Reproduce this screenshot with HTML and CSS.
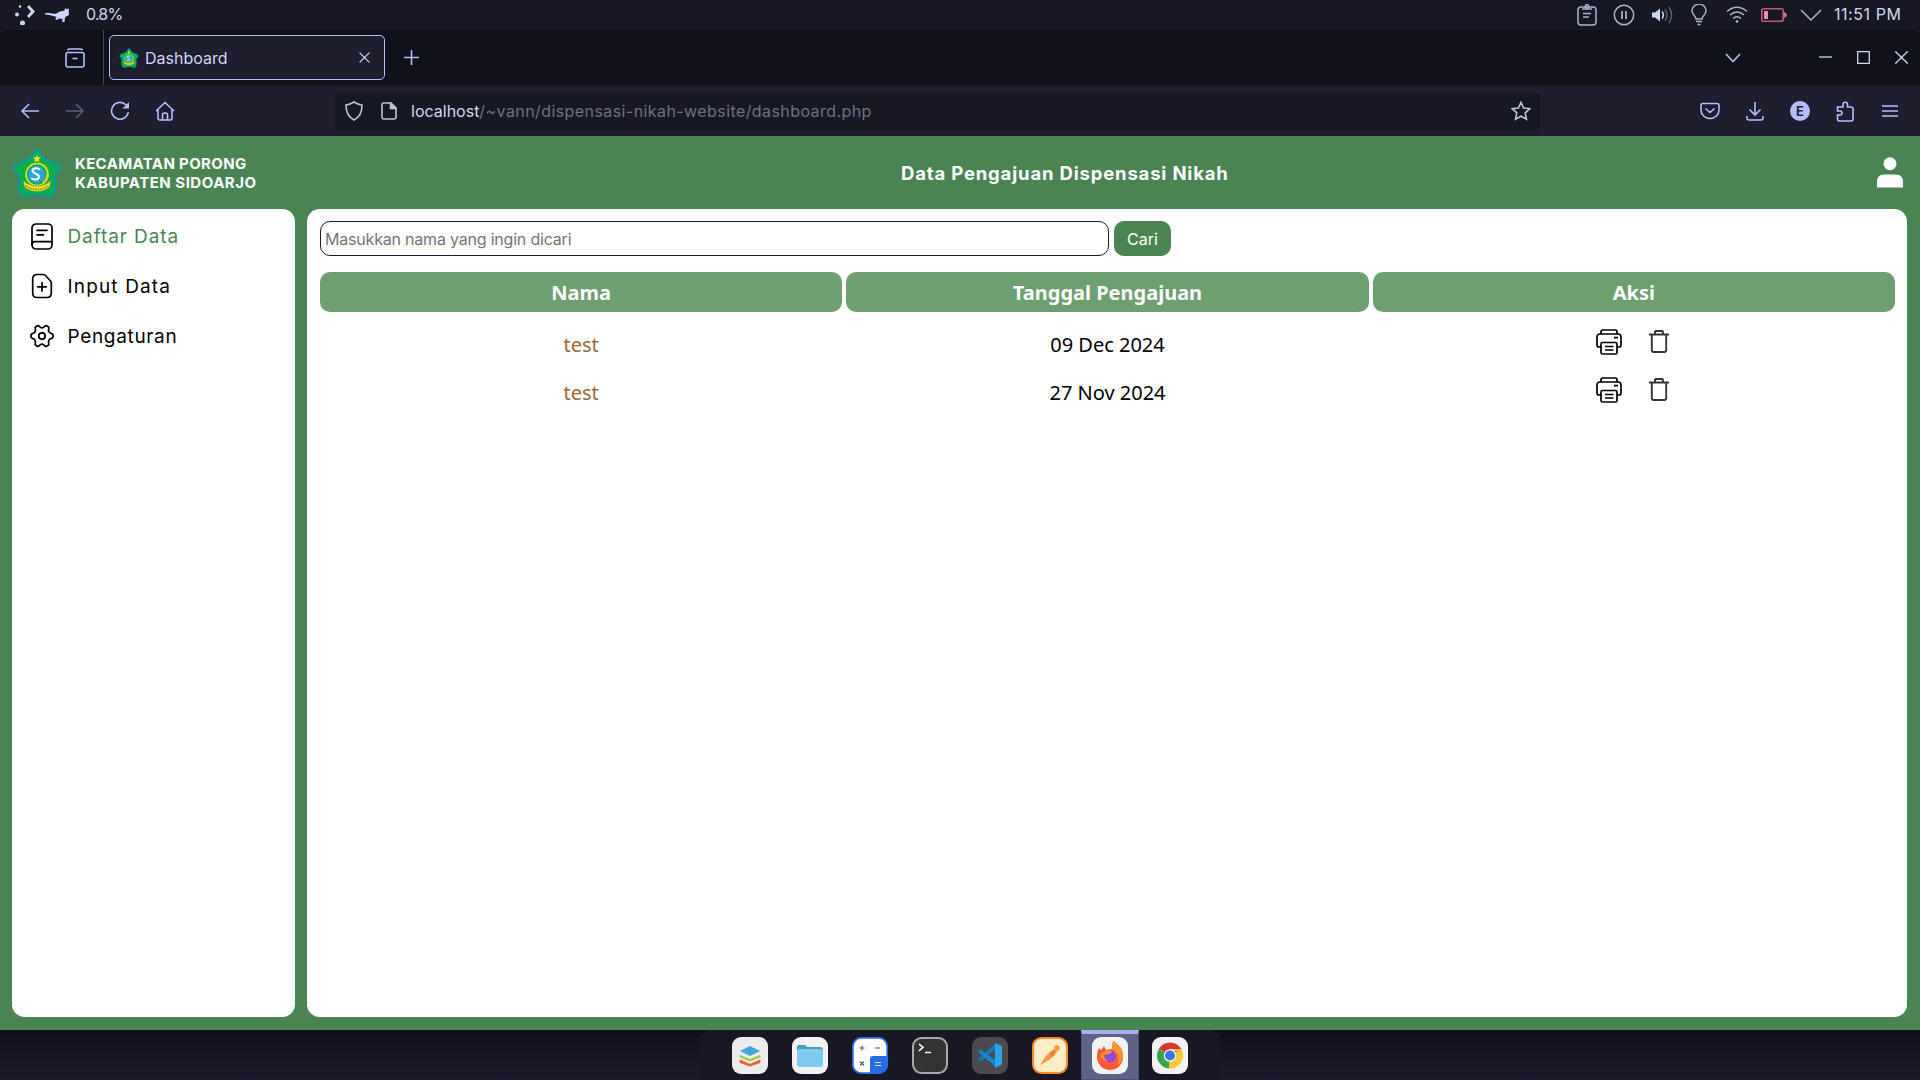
FILE: index.html
```html
<!DOCTYPE html>
<html lang="id">
<head>
<meta charset="utf-8">
<title>Dashboard</title>
<link rel="stylesheet" href="styles.css">
</head>
<body>
<svg class="defs" width="0" height="0">
  <symbol id="crest" viewBox="0 0 50 48">
    <path d="M22 3l1.500-2h3L28 3c1 5 4 7 8 8l6 3 5 1-1 2 3 2-2 2c-4 4-5 8-4 14l.5 6-2 2 .5 3-3 2-5-1c-6-2-12-2-18 0l-5 1-3-2 .5-3-2-2L7 35c1-6 0-10-4-14l-2-2 3-2-1-2 5-1 6-3c4-1 7-3 8-8z" fill="#08ae4c" stroke="#0895bd" stroke-width="1.500"/>
    <path d="M25 5.500l1 3h3.200l-2.500 2 1 3-2.700-1.800-2.700 1.800 1-3-2.500-2H24z" fill="#f5e52c"/>
    <circle cx="25" cy="25.500" r="11" fill="none" stroke="#e9df27" stroke-width="1.500"/>
    <circle cx="24.500" cy="25.500" r="8.500" fill="#2aa5df"/>
    <path d="M28 21c-2-3-7.500-2-7.500.8s7 3.200 6.500 6.200-6 3.400-7.500 1" fill="none" stroke="#fff" stroke-width="2"/>
    <path d="M31 16c6 4 6 13 0 17" fill="none" stroke="#d9d227" stroke-width="2.500" stroke-dasharray="2 1"/>
    <path d="M11 31c7 8 21 8 28 0l-1.500 7c-7 6-18 6-25 0z" fill="#f1df23" stroke="#66903b" stroke-width=".6"/>
    <path d="M14 37c7 4.500 15 4.500 22 0" fill="none" stroke="#6f7d28" stroke-width="1.200" stroke-dasharray="1.500 1"/>
  </symbol>
  <symbol id="printer" viewBox="0 0 26 26" fill="none" stroke="#000" stroke-width="1.700" stroke-linejoin="round">
    <path d="M5 5V3q0-2 2-2h12q2 0 2 2v2M5 18H3q-2 0-2-2V8q0-3 3-3h18q3 0 3 3v8q0 2-2 2h-2"/>
    <rect x="5" y="13.500" width="16" height="11.500" rx="1.500"/>
    <path d="M9 17.500h8.500M9 21h8.500M18 8.700h4"/>
  </symbol>
  <symbol id="trash" viewBox="0 0 20 23" fill="none" stroke="#333" stroke-width="1.900">
    <path d="M0 4.500h20M6 4V2q0-1 1-1h6q1 0 1 1v2M2.800 5v15q0 2 2 2h10.400q2 0 2-2V5"/>
  </symbol>
</svg>

<header class="panel">
  <div class="panel-left">
    <svg width="20" height="20" viewBox="0 0 20 20" fill="#cdd6f4"><circle cx="5" cy="1.500" r="1.300"/><circle cx="2" cy="9.500" r="1.900"/><circle cx="7.500" cy="18" r="2.500"/><path d="M12 2l2-2 6 6.500-6 6.500-2-2 4-4.500z"/></svg>
    <svg width="25" height="15" viewBox="0 0 25 15"><path d="M0 5.200c5-.7 8 1.500 12 0 2-2 5-2 7.500-2.700L20 0l1.500 1.300L24 .5l-.3 3.500.3 2.500c-1 1.500-2.500 1.500-4 3L19.500 14h-2.300l.3-3-3.500-.5-2 1.500-1.800-.8 1.300-2.200C8 8 5 6.500 0 6.500z" fill="#cdd6f4"/></svg>
    <span class="load">0.8%</span>
  </div>
  <div class="panel-right">
    <svg width="20" height="22" viewBox="0 0 20 22" class="tray"><rect x="1" y="3" width="18" height="18" rx="3"/><circle cx="10" cy="2.500" r="1.800"/><path d="M5 5h10M6 9.500h8M6 13h6"/></svg>
    <svg width="22" height="22" viewBox="0 0 22 22" class="tray"><circle cx="11" cy="11" r="9.700"/><path d="M9 7v8M13 7v8" stroke-width="1.800"/></svg>
    <svg width="22" height="20" viewBox="0 0 22 20" class="tray"><path d="M1 7.500h3l5-4v13l-5-4H1z" fill="#cdd6f4" stroke="none"/><path d="M11 6.500q2.800 3.500 0 7" stroke="#cdd6f4"/><path d="M14 4.500q4 5.500 0 11M18 2q5 8 0 16" opacity=".45"/></svg>
    <svg width="16" height="22" viewBox="0 0 16 22" class="tray"><path d="M5 15c0-3-4-4-4-8a7 7 0 0 1 14 0c0 4-4 5-4 8zM5 17.500h6M6.500 20.500h3"/></svg>
    <svg width="22" height="18" viewBox="0 0 22 18" class="tray"><path d="M1 5.500q10-8.500 20 0M4 9q7-6 14 0M7 12.500q4-3.500 8 0"/><circle cx="11" cy="15.500" r="1.200" fill="#bac2de" stroke="none"/></svg>
    <svg class="battery" width="26" height="14" viewBox="0 0 26 14"><rect x=".8" y=".8" width="21.400" height="12.400" rx="2" fill="none" stroke="#b95d7b" stroke-width="1.600"/><path d="M3 3h4v8H3z" fill="#f38ba8"/><path d="M23 4q3 1 3 3t-3 3z" fill="#d16f8e"/></svg>
    <svg width="22" height="12" viewBox="0 0 22 12" class="tray"><path d="M1 1l10 10L21 1"/></svg>
    <time class="clock">11:51 PM</time>
  </div>
</header>

<section class="tabs">
  <svg class="archive" width="20" height="20" viewBox="0 0 20 20"><path d="M3.500 1h13M2.500 2.300L3.500 1M17.500 2.300L16.500 1"/><rect x="1" y="4.500" width="18" height="14.500" rx="2"/><path d="M7.500 10.500h5"/></svg>
  <span class="divider"></span>
  <div class="tab">
    <svg width="20" height="20"><use href="#crest"/></svg>
    <span class="tab-title">Dashboard</span>
    <svg class="tab-close" width="11" height="11" viewBox="0 0 11 11"><path d="M.6.6l9.800 9.800M10.400.6L.6 10.400"/></svg>
  </div>
  <svg class="plus" width="15" height="15" viewBox="0 0 15 15"><path d="M7.500 0v15M0 7.500h15"/></svg>
  <div class="window-controls">
    <svg class="list" width="16" height="10" viewBox="0 0 16 10"><path d="M1 1l7 7.500L15 1"/></svg>
    <svg width="13" height="13" viewBox="0 0 13 13"><path d="M0 6h13"/></svg>
    <svg width="13" height="13" viewBox="0 0 13 13"><path d="M.7.700h11.600v11.600H.7z"/></svg>
    <svg width="13" height="13" viewBox="0 0 13 13"><path d="M.3.300l12.400 12.400M12.700.3L.3 12.700"/></svg>
  </div>
</section>

<nav class="toolbar">
  <div class="nav-buttons">
    <svg width="20" height="20" viewBox="0 0 20 20"><path d="M19 10H2M9 3l-7 7 7 7"/></svg>
    <svg class="dim" width="20" height="20" viewBox="0 0 20 20"><path d="M1 10h17M11 3l7 7-7 7"/></svg>
    <svg width="20" height="20" viewBox="0 0 20 20"><path d="M18.300 11A8.400 8.400 0 1 1 15.500 3.500l2 2"/><path d="M19 1v6.500h-6.500z" fill="#b4befe" stroke="none"/></svg>
    <svg width="20" height="20" viewBox="0 0 20 20"><path d="M1 10l9-8.500 9 8.500M3 8.500V17q0 2 2 2h10q2 0 2-2V8.500M7.500 19v-5q0-2 2-2h1q2 0 2 2v5"/></svg>
  </div>
  <div class="urlbar">
    <svg width="18" height="20" viewBox="0 0 18 20"><path d="M9 1q4 2.500 8 3c0 7-2 12-8 15C3 16 1 11 1 4q4-.5 8-3z"/></svg>
    <svg width="16" height="18" viewBox="0 0 16 18"><path d="M3 1h7l5 5v9q0 2-2 2H3q-2 0-2-2V3q0-2 2-2z"/><path d="M9.500 1v5.500H15z" fill="#bac2de"/></svg>
    <span class="url"><b>localhost</b>/~vann/dispensasi-nikah-website/dashboard.php</span>
    <svg class="star" width="20" height="20" viewBox="0 0 20 20"><path d="M10 1.300l2.600 5.700 6.200.7-4.600 4.200 1.300 6.300L10 15.200l-5.500 3 1.300-6.300L1.200 7.700l6.200-.7z"/></svg>
  </div>
  <div class="tools">
    <svg width="20" height="18" viewBox="0 0 20 18"><path d="M3 1.500h14q2 0 2 2V8a9 8.500 0 0 1-18 0V3.500q0-2 2-2zM5.500 6.500l4.500 4 4.500-4"/></svg>
    <svg width="18" height="20" viewBox="0 0 18 20"><path d="M9 1v13M3.500 8.500L9 14l5.500-5.500M1 15v2q0 2 2 2h12q2 0 2-2v-2"/></svg>
    <span class="account">E</span>
    <svg width="18" height="21" viewBox="0 0 18 21"><path d="M1.500 6H7V3.500a2.200 2.200 0 0 1 4.500 0V6H15q2 0 2 2v10q0 2-2 2H3.500q-2 0-2-2v-4H4a2 2 0 0 0 0-4H1.500z"/></svg>
    <svg class="menu" width="16" height="14" viewBox="0 0 16 14"><path d="M0 2h16M0 7h16M0 12h16"/></svg>
  </div>
</nav>

<div class="page">
  <header class="page-header">
    <div class="brand">
      <svg width="50" height="48"><use href="#crest"/></svg>
      <div class="brand-name"><div class="line-a">KECAMATAN PORONG</div><div class="line-b">KABUPATEN SIDOARJO</div></div>
    </div>
    <h1 class="page-title">Data Pengajuan Dispensasi Nikah</h1>
    <svg class="user" width="26" height="31" viewBox="0 0 26 31" fill="#fff"><circle cx="13" cy="6.700" r="6.500"/><path d="M0 30.500V25q0-7.500 7-7.500h12q7 0 7 7.500v5.500z"/></svg>
  </header>
  <div class="page-body">
    <aside class="sidebar">
      <a class="item active"><svg width="22" height="27" viewBox="0 0 22 27"><rect x="1" y="1" width="20" height="25" rx="4"/><path d="M1 22q0-3.300 3-3.300h17M6 7.300h10M6 11.800h6.500"/></svg><span class="label-list">Daftar Data</span></a>
      <a class="item"><svg width="22" height="26" viewBox="0 0 22 26"><path d="M6 1.500h6.500q1 0 2 1L19.500 8q.8 1 .8 2v10q0 4.500-4.500 4.500H6q-4.300 0-4.300-4.500V6q0-4.500 4.300-4.500zM11 9.500v8.500M6.700 13.800h8.600"/></svg><span class="label-input">Input Data</span></a>
      <a class="item"><svg width="24" height="24" viewBox="0 0 24 24"><circle cx="12" cy="12" r="3.200"/><path d="M12 3.800c3 0 2.200-2.500 4.200-2.200l2.300 1.300c1.300 1.300-1 2.600.5 5 1.500 2.500 4 1 4 3v2.200c0 2-2.500.5-4 3-1.500 2.400.8 3.700-.5 5l-2.300 1.300c-2 .3-1.200-2.200-4.200-2.200s-2.200 2.500-4.200 2.200l-2.300-1.300c-1.300-1.300 1-2.600-.5-5-1.500-2.500-4-1-4-3v-2.200c0-2 2.500-.5 4-3 1.500-2.400-.8-3.700.5-5l2.300-1.300c2-.3 1.200 2.200 4.200 2.200z"/></svg><span class="label-settings">Pengaturan</span></a>
    </aside>
    <main class="content">
      <form class="search">
        <input class="search-input" type="text" placeholder="Masukkan nama yang ingin dicari">
        <button class="search-button" type="button">Cari</button>
      </form>
      <div class="table">
        <div class="row head"><div>Nama</div><div>Tanggal Pengajuan</div><div>Aksi</div></div>
        <div class="row"><div class="name">test</div><div>09 Dec 2024</div><div class="actions"><svg width="26" height="26"><use href="#printer"/></svg><svg width="20" height="23"><use href="#trash"/></svg></div></div>
        <div class="row"><div class="name">test</div><div>27 Nov 2024</div><div class="actions"><svg width="26" height="26"><use href="#printer"/></svg><svg width="20" height="23"><use href="#trash"/></svg></div></div>
      </div>
    </main>
  </div>
</div>

<footer class="taskbar">
  <div class="dock">
    <span class="app"><svg width="36" height="37" viewBox="0 0 36 37"><rect width="36" height="37" rx="9" fill="#ececec"/><path d="M8 23l10 4.500L28 23v2.500L18 29 8 25.500z" fill="#f45c2d" stroke="#f45c2d"/><path d="M8 18.500l10 4 10-4V20l-10 4-10-4z" fill="#a4cc35" stroke="#a4cc35"/><path d="M18 9l10 5-10 5-10-5z" fill="#44a6d8"/></svg></span>
    <span class="app"><svg width="36" height="37" viewBox="0 0 36 37"><rect width="36" height="37" rx="9" fill="#f2f2f2"/><path d="M5 10q0-2 2-2h6l2 2h13q3 0 3 3v8H5z" fill="#4a9dc2"/><rect x="5" y="12" width="26" height="18" rx="2.500" fill="#7ecbf2"/></svg></span>
    <span class="app"><svg width="36" height="37" viewBox="0 0 36 37"><rect x=".8" y=".8" width="34.400" height="35.400" rx="8.500" fill="#fff" stroke="#276de0" stroke-width="1.800"/><path d="M18 36V22q0-3 3-3h14v9q0 8-8 8z" fill="#276de0"/><path d="M7.500 11h5M10 8.500v5M23 11h5M8 24.500l4 4M12 24.500l-4 4" stroke="#555" stroke-width="1.100"/><path d="M23 25.500h6M23 28.500h6" stroke="#d2e3ff" stroke-width="1.100"/></svg></span>
    <span class="app"><svg width="36" height="37" viewBox="0 0 36 37"><rect x="1" y="1" width="34" height="35" rx="8.500" fill="#333" stroke="#aaa" stroke-width="2"/><path d="M7 7l4 3.300-4 3.500M13 15.500h6" fill="none" stroke="#fff" stroke-width="1.600"/></svg></span>
    <span class="app"><svg width="36" height="37" viewBox="0 0 36 37"><rect width="36" height="37" rx="9" fill="#4b4b4d"/><path d="M24 6L6 22l2.500 2.500L24 12z" fill="#1678b8"/><path d="M24 30L6 15l2.500-2.500L24 24z" fill="#098bd1"/><path d="M23 6l7 3v18.500L23 31z" fill="#2ca3ee"/></svg></span>
    <span class="app"><svg width="36" height="37" viewBox="0 0 36 37"><rect x="1" y="1" width="34" height="35" rx="8.500" fill="#fdecc5" stroke="#f98a2c" stroke-width="2"/><path d="M8 28l6-9 5-5 4 4-6 5z" fill="#f39a48"/><path d="M17 16l5-4 3 3-5 5z" fill="#e98732"/><circle cx="25" cy="11" r="2.800" fill="#f39a48"/></svg></span>
    <span class="app current"><svg width="36" height="37" viewBox="0 0 36 37"><rect width="36" height="37" rx="9" fill="#f4f3f3"/><path d="M7 11l2 2 3-4 2 4 6-1 1-8c8 5 11 11 10 16a13 13 0 0 1-26 0q0-6 2-9z" fill="#ff5a37"/><path d="M20 12l1-8c8 5 11 11 10 16q-1 5-5 8 3-10-6-16z" fill="#ff922d"/><circle cx="18" cy="19.500" r="6" fill="#8e48df"/><path d="M8 17q5-5 12-3-1 4-8 4 0 5 5 6-7 1-9-7z" fill="#ff8c30"/></svg></span>
    <span class="app"><svg width="36" height="37" viewBox="0 0 36 37"><rect width="36" height="37" rx="9" fill="#f2f2f2"/><path d="M18 18.500L6.700 12a13 13 0 0 1 22.600 0z" fill="#d93832"/><path d="M18 18.500L6.700 12A13 13 0 0 0 17 31.500z" fill="#38a44d"/><path d="M18 18.500L29.300 12A13 13 0 0 1 17 31.500z" fill="#f8c938"/><path d="M18 12h11.300l1 2H18z" fill="#f8c938"/><circle cx="18" cy="18.500" r="6.200" fill="#fff"/><circle cx="18" cy="18.500" r="5" fill="#3f73e8"/></svg></span>
  </div>
</footer>
</body>
</html>
```

FILE: styles.css
```css
* { box-sizing: border-box; }
body {
  margin: 0;
  width: 1920px;
  height: 1080px;
  overflow: hidden;
  display: flex;
  flex-direction: column;
  font-family: Inter, "Noto Sans", sans-serif;
  font-size: 16px;
  background: #181825;
}
svg { display: block; flex: none; }
.defs { display: none; }

.panel {
  height: 30px;
  flex: none;
  display: flex;
  justify-content: space-between;
  align-items: center;
  padding: 0 16px 0 15px;
  background: #181825;
  color: #cdd6f4;
}
.panel-left, .panel-right { display: flex; align-items: center; }
.panel-left { gap: 10px; }
.load { margin-left: 6px; line-height: 28px; height: 30px; letter-spacing: -0.8px; }
.panel-right { gap: 15.5px; }
.tray { width: 22px; fill: none; stroke: #a9b1cf; stroke-width: 1.5; }
.battery { margin: 0 -3px 0 -2px; }
.clock { width: 70px; line-height: 28px; height: 30px; white-space: nowrap; letter-spacing: 0.55px; margin-left: -3px; }

.tabs {
  height: 55px;
  flex: none;
  display: flex;
  align-items: center;
  padding: 0 12px 0 65px;
  background: #11111b;
  border-radius: 6px 6px 0 0;
  fill: none;
  stroke: #b4befe;
  stroke-width: 1.6;
}
.divider { width: 1px; height: 55px; margin: 0 5px 0 18px; background: #45475a; }
.tab {
  width: 276px;
  height: 45px;
  display: flex;
  align-items: center;
  padding: 0 14px 0 9px;
  border: 1px solid #b4befe;
  border-radius: 5px;
  background: #1e1e2e;
  color: #cdd6f4;
}
.tab > svg:first-child { stroke: none; }
.tab-title { flex: 1; margin-left: 6px; }
.tab-close { stroke: #cdd6f4; stroke-width: 1.3; }
.plus { margin-left: 19px; }
.window-controls { flex: 1; display: flex; justify-content: flex-end; align-items: center; gap: 25px; stroke: #cdd6f4; stroke-width: 1.3; }
.list { margin-right: 53px; stroke: #b4befe; stroke-width: 1.6; }

.toolbar {
  height: 51px;
  flex: none;
  display: flex;
  align-items: center;
  padding: 0 22px 0 20px;
  background: #1e1e2e;
  border-top: 1px solid #191927;
  fill: none;
  stroke: #b4befe;
  stroke-width: 1.6;
}
.nav-buttons { display: flex; gap: 25px; }
.dim { opacity: .4; }
.urlbar {
  width: 1205px;
  height: 37px;
  margin-left: 160px;
  padding: 0 9px 0 10px;
  display: flex;
  align-items: center;
  border-radius: 4px;
  background: #181825;
  stroke: #bac2de;
}
.urlbar svg + svg { margin-left: 18px; }
.url { flex: 1; margin-left: 14px; color: #6c7086; white-space: nowrap; letter-spacing: 0.42px; }
.url b { font-weight: 400; color: #cdd6f4; letter-spacing: 0; }
.tools { flex: 1; display: flex; align-items: center; justify-content: flex-end; gap: 26px; }
.menu { margin-left: 2px; }
.account {
  width: 20px;
  height: 20px;
  border-radius: 50%;
  background: #b4befe;
  color: #1e1e2e;
  font-size: 13px;
  font-weight: 700;
  line-height: 20px;
  text-align: center;
}

.page {
  height: 894px;
  flex: none;
  display: flex;
  flex-direction: column;
  padding: 0 13px 13px 12px;
  background: #4b8453;
}
.page-header {
  height: 73px;
  flex: none;
  display: grid;
  grid-template-columns: 295px 1fr 130px;
  align-items: center;
  color: #fff;
}
.brand { display: flex; align-items: center; gap: 13px; }
.brand-name { font-size: 15px; font-weight: 700; line-height: 19px; white-space: nowrap; }
.line-a { letter-spacing: 0.36px; }
.line-b { letter-spacing: 0.5px; }
.page-title { margin: 0 0 0 594px; white-space: nowrap; font-size: 18.5px; font-weight: 700; letter-spacing: 0.83px; }
.user { justify-self: end; margin-right: 4px; }
.page-body { flex: 1; display: flex; gap: 12px; }
.sidebar { width: 283px; padding: 2px 17px; border-radius: 12.5px; background: #fff; }
.item { height: 50px; display: flex; align-items: center; color: #000; font-size: 19px; }
.item svg { width: 26px; fill: none; stroke: #000; stroke-width: 1.7; stroke-linecap: round; stroke-linejoin: round; }
.item span { margin-left: 12.5px; white-space: nowrap; }
.item.active { color: #4b8453; }
.label-list { letter-spacing: 0.9px; }
.label-input { letter-spacing: 1.15px; }
.label-settings { letter-spacing: 0.67px; }
.content { flex: 1; padding: 12px 12px 12px 13px; border-radius: 12.5px; background: #fff; }
.search { display: flex; gap: 5px; }
.search-input {
  width: 789px;
  height: 35px;
  padding: 0 4px;
  border: 1px solid #1a1a35;
  border-radius: 10px;
  background: #fff;
  font: 16px Inter, "Noto Sans", sans-serif;
  letter-spacing: -0.2px;
}
.search-input::placeholder { color: #757575; }
.search-button {
  width: 57px;
  height: 35px;
  padding: 0;
  border: 0;
  border-radius: 10px;
  background: #4b8453;
  color: #fff;
  font: 16px Inter, "Noto Sans", sans-serif;
}
.table { margin-top: 16px; font: 20px/28px "Noto Sans", sans-serif; }
.row { display: grid; grid-template-columns: repeat(3, 1fr); gap: 4px; height: 48px; align-items: center; text-align: center; color: #000; }
.head { height: 40px; margin-bottom: 9px; color: #fff; font-weight: 700; }
.head div { height: 40px; line-height: 41px; border-radius: 10px; background: #6d9f70; }
.name { color: #996936; }
.actions { display: flex; justify-content: center; align-items: center; gap: 27px; height: 42px; padding: 0 2px 7px 0; }

.taskbar {
  flex: 1;
  display: flex;
  justify-content: center;
  background: linear-gradient(#11111c, #1b1b2d);
}
.dock { width: 520px; display: flex; padding-left: 20px; border-radius: 10px 10px 0 0; background: #181825; }
.app { width: 60px; height: 50px; padding-top: 7px; display: flex; justify-content: center; }
.current { width: 58px; margin: 0 1px; background: #5f6287; border: 1px solid #4d5075; border-top: 4px solid #a8b0ef; padding-top: 3px; }
```
